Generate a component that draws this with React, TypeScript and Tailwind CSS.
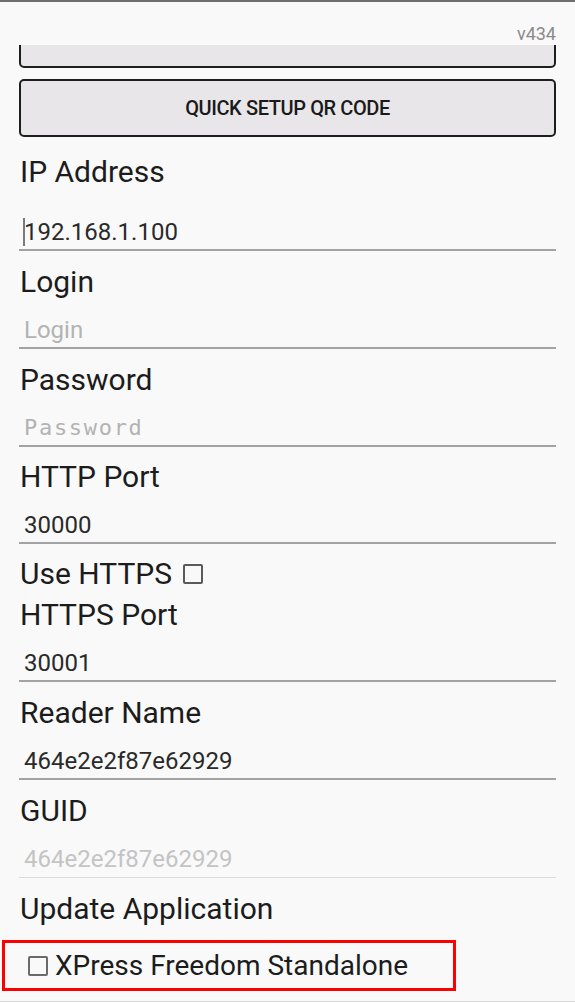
import React from 'react';

interface FieldProps {
  label: string;
  value: string;
  kind?: 'value' | 'placeholder' | 'password' | 'disabled';
  focused?: boolean;
  top?: string;
}

function Field({ label, value, kind = 'value', focused = false, top = 'mt-[16px]' }: FieldProps) {
  const textClass =
    kind === 'placeholder'
      ? 'text-[#b3b3b3]'
      : kind === 'password'
      ? "text-[#b3b3b3] font-['DejaVu_Sans_Mono',monospace] text-[22px] tracking-[1.7px]"
      : kind === 'disabled'
      ? 'text-[#c4c4c4]'
      : 'text-[#2a2a2a]';
  const lineClass =
    kind === 'disabled' ? 'border-b border-[#dcdcdc] pb-[6px]' : 'border-b-2 border-[#a3a3a3] pb-[5px]';

  return (
    <div>
      <div className={`${top} text-[30px] leading-[30px] text-[#1c1c1c] pl-[1px]`}>{label}</div>
      <div className={`${focused ? 'pt-[33px]' : 'pt-[21px]'} ${lineClass} pl-[5px] text-[24px] leading-[24px] flex items-center`}>
        {focused && <span className="inline-block w-[2px] h-[28px] -my-[2px] bg-[#7a7a7a] -ml-[1px] -mr-[1px]" />}
        <span className={textClass}>{value}</span>
      </div>
    </div>
  );
}

export default function App() {
  return (
    <div className="w-[575px] h-[1002px] bg-[#f9f9f9] border-t-2 border-[#6e6e6e] flex flex-col overflow-hidden font-['Roboto',sans-serif]">
      {/* Version */}
      <div className="h-[43px] shrink-0 flex justify-end items-end pr-[19px] pb-[2px]">
        <span className="text-[18px] leading-[18px] text-[#8a8a8a]">v434</span>
      </div>

      {/* Scrolled settings list */}
      <div className="flex-1 overflow-hidden px-[19px] flex flex-col border-b border-[#d6d6d6]">
        <div className="-mt-[35px] h-[58px] shrink-0 rounded-[5px] border-[2.5px] border-[#1e1e1e] bg-[#e8e6e9]" />
        <button className="mt-[11px] h-[58px] shrink-0 rounded-[5px] border-[2.5px] border-[#1e1e1e] bg-[#e8e6e9] text-[20px] font-medium tracking-[-0.4px] text-[#1a1a1a]">
          QUICK SETUP QR CODE
        </button>

        <Field label="IP Address" value="192.168.1.100" focused top="mt-[20px]" />
        <Field label="Login" value="Login" kind="placeholder" />
        <Field label="Password" value="Password" kind="password" />
        <Field label="HTTP Port" value="30000" top="mt-[15px]" />

        <div className="mt-[15px] flex items-center text-[30px] leading-[30px] text-[#1c1c1c] pl-[1px]">
          Use HTTPS
          <span className="ml-[11px] inline-block w-[20px] h-[20px] border-2 border-[#5a5a5a] rounded-[2px]" />
        </div>

        <Field label="HTTPS Port" value="30001" top="mt-[11px]" />
        <Field label="Reader Name" value="464e2e2f87e62929" />
        <Field label="GUID" value="464e2e2f87e62929" kind="disabled" />

        <div className="mt-[16px] text-[30px] leading-[30px] text-[#1c1c1c] pl-[1px]">Update Application</div>

        <div className="mt-[16px] -ml-[17px] w-[454px] h-[51px] shrink-0 border-[3px] border-[#ff0000] flex items-center pl-[23px] gap-[7px]">
          <span className="inline-block w-[20px] h-[20px] border-2 border-[#6a6a6a] rounded-[2px]" />
          <span className="text-[28px] leading-[30px] text-[#1c1c1c]">XPress Freedom Standalone</span>
        </div>
      </div>
    </div>
  );
}
